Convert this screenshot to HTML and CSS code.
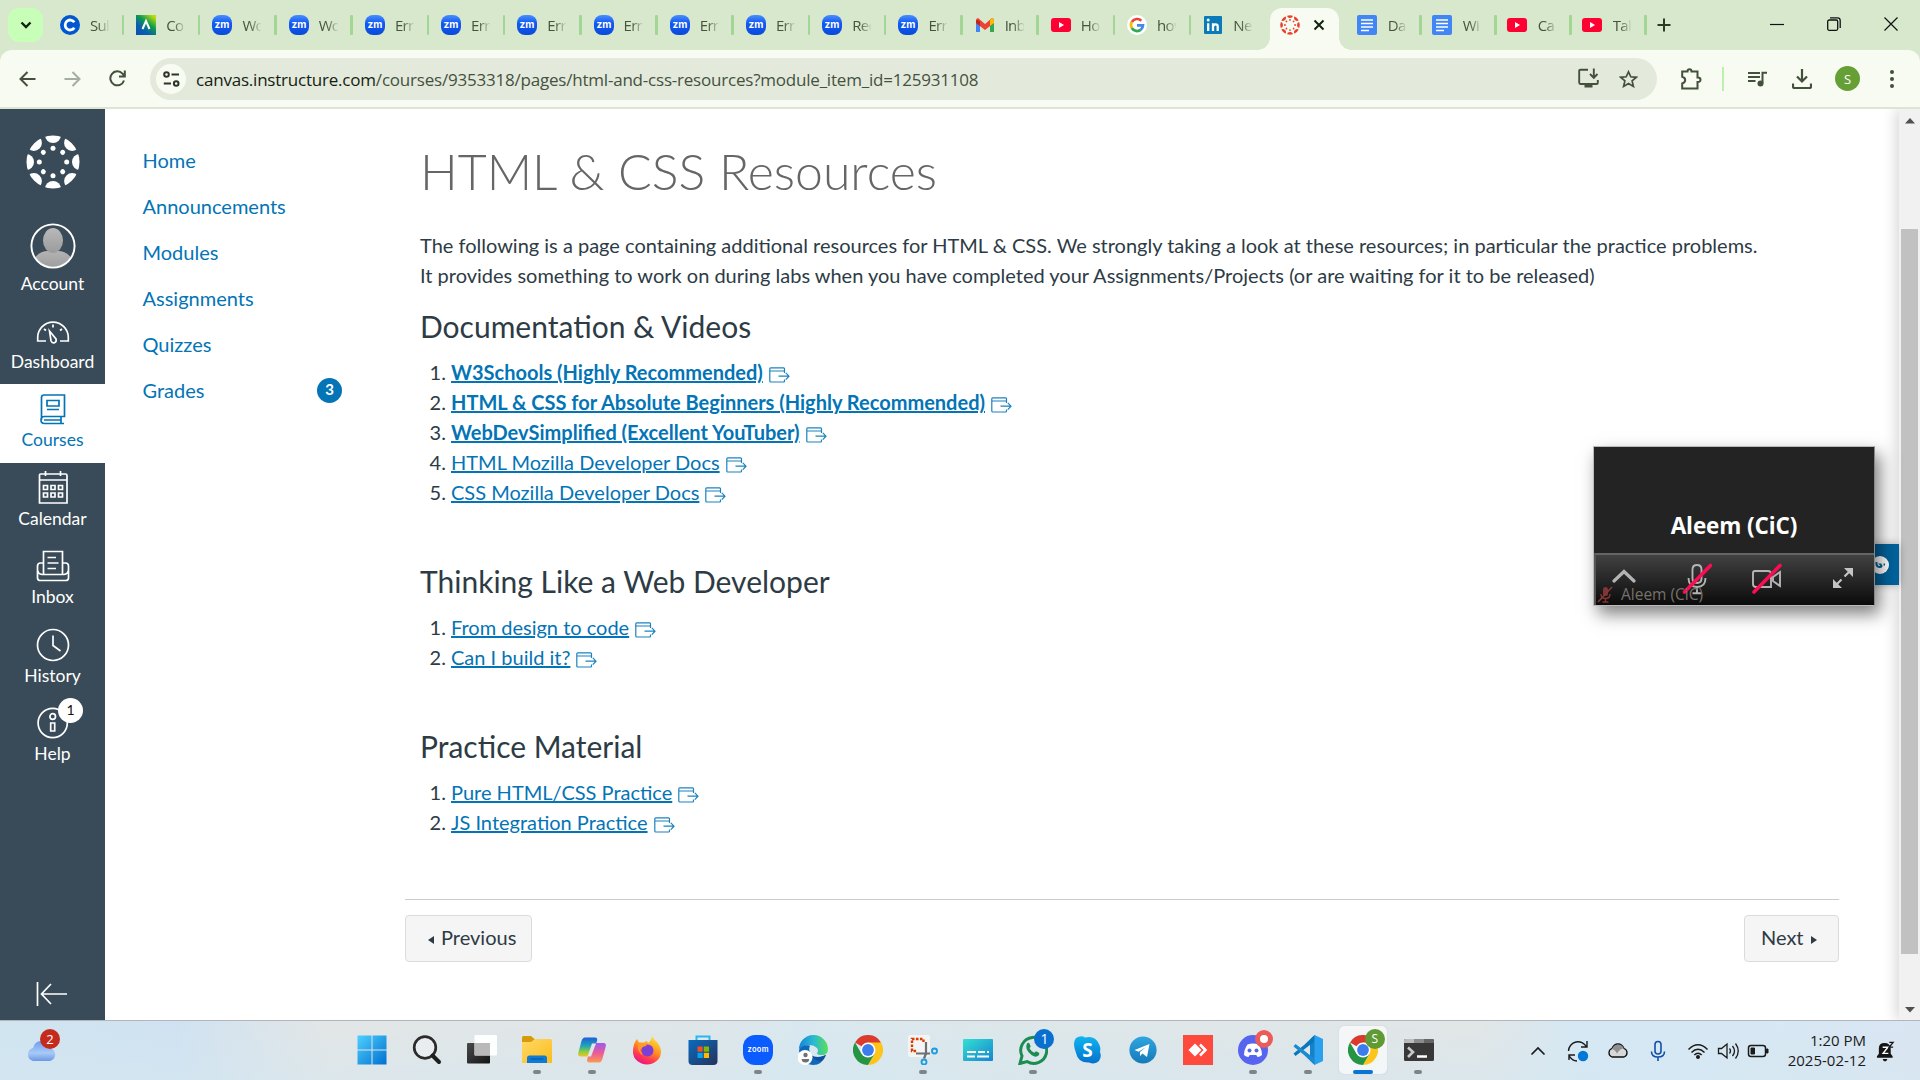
FILE: index.html
```html
<!DOCTYPE html>
<html lang="en">
<head>
<meta charset="utf-8">
<title>HTML &amp; CSS Resources</title>
<link rel="stylesheet" href="styles.css">
</head>
<body>
<svg class="defs" width="0" height="0">
  <defs>
    <linearGradient id="g-zoom" x1="0" y1="0" x2="0" y2="1"><stop offset="0" stop-color="#4a90fb"/><stop offset=".4" stop-color="#1259f5"/><stop offset="1" stop-color="#0a4bd8"/></linearGradient>
    <linearGradient id="g-code" x1="0" y1="1" x2=".8" y2="0"><stop offset="0" stop-color="#0a4fb5"/><stop offset=".35" stop-color="#0b5fae"/><stop offset=".65" stop-color="#0f9a4c"/><stop offset="1" stop-color="#b9dc10"/></linearGradient>
    <linearGradient id="g-win" x1="0" y1="0" x2="1" y2="1"><stop offset="0" stop-color="#4fd0ff"/><stop offset="1" stop-color="#0070d0"/></linearGradient>
    <linearGradient id="g-folder" x1="0" y1="0" x2="1" y2="1"><stop offset="0" stop-color="#ffd968"/><stop offset="1" stop-color="#fcbc1c"/></linearGradient>
    <linearGradient id="g-cop1" x1="0" y1="0" x2="0" y2="1"><stop offset="0" stop-color="#1a5fd8"/><stop offset=".45" stop-color="#23a5b8"/><stop offset=".75" stop-color="#8ccf3c"/><stop offset="1" stop-color="#f5c12b"/></linearGradient>
    <linearGradient id="g-cop2" x1="0" y1="0" x2="0" y2="1"><stop offset="0" stop-color="#9b5cf0"/><stop offset=".5" stop-color="#ea5a9a"/><stop offset="1" stop-color="#fb9a50"/></linearGradient>
    <linearGradient id="g-fox" x1=".8" y1="0" x2=".3" y2="1"><stop offset="0" stop-color="#ffe83b"/><stop offset=".45" stop-color="#ff9420"/><stop offset=".75" stop-color="#ff3a50"/><stop offset="1" stop-color="#e8128a"/></linearGradient>
    <linearGradient id="g-store" x1="0" y1="0" x2="1" y2="1"><stop offset="0" stop-color="#0b6bc0"/><stop offset="1" stop-color="#24325a"/></linearGradient>
    <linearGradient id="g-edge" x1="0" y1=".5" x2="1" y2=".5"><stop offset="0" stop-color="#1286d8"/><stop offset=".5" stop-color="#2ab9d2"/><stop offset="1" stop-color="#5ade58"/></linearGradient>
    <linearGradient id="g-cap" x1="0" y1="0" x2="1" y2="1"><stop offset="0" stop-color="#33e0d2"/><stop offset="1" stop-color="#1685cf"/></linearGradient>
    <linearGradient id="g-sky" x1="0" y1="0" x2="0" y2="1"><stop offset="0" stop-color="#10b4f0"/><stop offset="1" stop-color="#0572cc"/></linearGradient>
    <linearGradient id="g-tg" x1="0" y1="0" x2="0" y2="1"><stop offset="0" stop-color="#2fa6e0"/><stop offset="1" stop-color="#1679b8"/></linearGradient>
    <linearGradient id="g-cloud" x1="0" y1="0" x2="0" y2="1"><stop offset="0" stop-color="#6d9cf0"/><stop offset=".6" stop-color="#a9caf8"/><stop offset="1" stop-color="#6c98e2"/></linearGradient>
    <linearGradient id="g-av" x1="0" y1="0" x2="0" y2="1"><stop offset="0" stop-color="#b9b9b9"/><stop offset="1" stop-color="#9b9b9b"/></linearGradient>
    <linearGradient id="g-dark" x1="0" y1="0" x2="1" y2="1"><stop offset="0" stop-color="#4a4a4a"/><stop offset="1" stop-color="#141414"/></linearGradient>
  </defs>
  <symbol id="zm" viewBox="0 0 20 20"><rect width="20" height="20" rx="8" fill="url(#g-zoom)"/><text x="10" y="13.3" text-anchor="middle" font-family="Inter,sans-serif" font-weight="700" font-size="10" textLength="15" fill="#fff">zm</text></symbol>
  <symbol id="yt" viewBox="0 0 20 20"><rect y="3" width="20" height="14" rx="3" fill="#ff0033"/><path d="M8 7v6l5-3z" fill="#fff"/></symbol>
  <symbol id="doc" viewBox="0 0 20 20"><rect width="20" height="20" rx="2" fill="#4285f4"/><path d="M4 5h12M4 8.500h12M4 12h12M4 15.500h8" stroke="#fff" stroke-width="1.700"/></symbol>
  <symbol id="ring" viewBox="-27 -27 54 54"><defs><clipPath id="rc"><circle r="26.500"/></clipPath>
    <g id="seg" clip-path="url(#rc)"><ellipse cy="-27" rx="8" ry="8"/><circle cy="-13.700" r="2.500"/></g></defs>
    <use href="#seg"/><use href="#seg" transform="rotate(45)"/><use href="#seg" transform="rotate(90)"/><use href="#seg" transform="rotate(135)"/><use href="#seg" transform="rotate(180)"/><use href="#seg" transform="rotate(225)"/><use href="#seg" transform="rotate(270)"/><use href="#seg" transform="rotate(315)"/></symbol>
  <symbol id="chrome" viewBox="0 0 30 30"><path d="M15 15L2 7.500A15 15 0 0 1 28 7.500z" fill="#dc3a2c"/><path d="M15 7.500H28A15 15 0 0 1 15 30l6.500-11.300z" fill="#fdc51b"/><path d="M2 7.500A15 15 0 0 0 15 30l6.500-11.300L15 15 8.500 18.700z" fill="#259544"/><circle cx="15" cy="15" r="7.500" fill="#fff"/><circle cx="15" cy="15" r="5.900" fill="#3b7ded"/></symbol>
  <symbol id="ext" viewBox="0 0 21 16"><path d="M15.500 6V1.700Q15.500 .8 14.600 .8H1.700Q.8 .8 .8 1.700V14.100Q.8 15 1.700 15H14.600Q15.500 15 15.500 14.100V12.500M.8 4H15.500M9.500 9.200H20M16.800 5.800L20 9.200l-3.200 3.400" fill="none" stroke="currentColor" stroke-width="1.200"/></symbol>
</svg>

<header class="browser">
  <div class="tabstrip">
    <button class="tabsearch"><svg width="12" height="8" viewBox="0 0 12 8"><path d="M1.500 1.500L6 6l4.500-4.500" fill="none" stroke="#14230f" stroke-width="2.400"/></svg></button>
    <div class="tabs">
      <div class="tab"><svg viewBox="0 0 20 20"><circle cx="10" cy="10" r="10" fill="#0156d1"/><path d="M14.300 7.200A5 5 0 1 0 14.300 12.800" fill="none" stroke="#fff" stroke-width="2.800"/></svg><span>Sul</span></div>
      <div class="tab"><svg viewBox="0 0 20 20"><rect width="20" height="20" fill="url(#g-code)"/><path d="M6.500 14L10 6l3.500 8" fill="none" stroke="#fff" stroke-width="2"/></svg><span>Co</span></div>
      <div class="tab"><svg><use href="#zm"/></svg><span>Wo</span></div>
      <div class="tab"><svg><use href="#zm"/></svg><span>Wo</span></div>
      <div class="tab"><svg><use href="#zm"/></svg><span>Err</span></div>
      <div class="tab"><svg><use href="#zm"/></svg><span>Err</span></div>
      <div class="tab"><svg><use href="#zm"/></svg><span>Err</span></div>
      <div class="tab"><svg><use href="#zm"/></svg><span>Err</span></div>
      <div class="tab"><svg><use href="#zm"/></svg><span>Err</span></div>
      <div class="tab"><svg><use href="#zm"/></svg><span>Err</span></div>
      <div class="tab"><svg><use href="#zm"/></svg><span>Rec</span></div>
      <div class="tab"><svg><use href="#zm"/></svg><span>Err</span></div>
      <div class="tab"><svg viewBox="0 0 20 20"><path d="M1 17V5l4 3v9z" fill="#4285f4"/><path d="M15 17V8l4-3v12z" fill="#34a853"/><path d="M1 5.500Q1 3 3 3l7 6 7-6q2 0 2 2.500V8l-9 7-9-7z" fill="#ea4335"/><path d="M15 5l2-2q2 .5 2 2.500V8l-4 3z" fill="#fbbc04"/><path d="M1 8V5l4 1v5z" fill="#c5221f"/></svg><span>Inb</span></div>
      <div class="tab"><svg><use href="#yt"/></svg><span>Ho</span></div>
      <div class="tab"><svg viewBox="0 0 20 20"><circle cx="10" cy="10" r="10" fill="#fff"/><g fill="none" stroke-width="2.700"><path d="M4.800 7A6 6 0 0 1 14.300 5.800" stroke="#ea4335"/><path d="M4.800 7a6 6 0 0 0 0 6" stroke="#fbbc04"/><path d="M4.800 13A6 6 0 0 0 13.900 14.600" stroke="#34a853"/><path d="M13.900 14.600A6 6 0 0 0 16 10.300H10" stroke="#4285f4"/></g></svg><span>hov</span></div>
      <div class="tab last"><svg viewBox="0 0 20 20"><rect x="1" y="1" width="18" height="18" rx="1" fill="#0a7ab8"/><path d="M5.200 8.200V16M10 16V8.200M10 12q0-2.700 2.500-2.700T14.700 12v4" fill="none" stroke="#fff" stroke-width="2.300"/><circle cx="5.200" cy="5" r="1.500" fill="#fff"/></svg><span>Ne</span></div>
      <div class="tab active"><svg class="red"><use href="#ring"/></svg><svg class="x" viewBox="0 0 12 12"><path d="M1.500 1.500l9 9M10.500 1.500l-9 9" stroke="#14230f" stroke-width="2"/></svg></div>
      <div class="tab after"><svg><use href="#doc"/></svg><span>Da</span></div>
      <div class="tab after"><svg><use href="#doc"/></svg><span>Wi</span></div>
      <div class="tab after"><svg><use href="#yt"/></svg><span>Ca</span></div>
      <div class="tab after"><svg><use href="#yt"/></svg><span>Tak</span></div>
    </div>
    <svg class="plus" viewBox="0 0 14 14"><path d="M7 .5v13M.5 7h13" stroke="#2c3b28" stroke-width="2"/></svg>
    <div class="winctl">
      <svg width="14" height="14" viewBox="0 0 14 14"><path d="M0 7.500h14" stroke="#111" stroke-width="1.200"/></svg>
      <svg width="14" height="14" viewBox="0 0 14 14"><rect x=".7" y="3" width="10" height="10.300" rx="1.500" fill="none" stroke="#111" stroke-width="1.300"/><path d="M3 .8h7.500q2.700 0 2.700 2.700V11" fill="none" stroke="#111" stroke-width="1.300"/></svg>
      <svg width="14" height="14" viewBox="0 0 14 14"><path d="M.5 .5l13 13M13.500 .5l-13 13" stroke="#111" stroke-width="1.200"/></svg>
    </div>
  </div>
  <div class="toolbar">
    <svg class="nav" width="17" height="16" viewBox="0 0 17 16"><path d="M16.500 8H2M8.500 1L1.500 8l7 7" fill="none" stroke="#42503c" stroke-width="2"/></svg>
    <svg class="nav" width="17" height="16" viewBox="0 0 17 16"><path d="M.5 8H15M8.500 1l7 7-7 7" fill="none" stroke="#a5aca0" stroke-width="2"/></svg>
    <svg class="nav" width="17" height="17" viewBox="0 0 17 17"><path d="M15 10.500A7 7 0 1 1 13.500 3.600L15.500 6M15.800 .5V6.500H10" fill="none" stroke="#42503c" stroke-width="2"/></svg>
    <div class="omnibox">
      <span class="site"><svg width="17" height="16" viewBox="0 0 17 16"><g fill="none" stroke="#2b3528" stroke-width="2"><circle cx="3.500" cy="3.500" r="2.300"/><path d="M8.500 3.500H16M.8 12.500H8"/><circle cx="13.200" cy="12.500" r="2.300"/></g></svg></span>
      <span class="url"><b>canvas.instructure.com</b>/courses/9353318/pages/html-and-css-resources?module_item_id=125931108</span>
      <svg class="inst" width="21" height="21" viewBox="0 0 21 21"><path d="M10 1.700H2.500Q1.200 1.700 1.200 3v11.500Q1.200 16 2.500 16H18.500q1.300 0 1.300-1.300V12M15.800 .5V9.500M12 6l3.800 3.800L19.500 6" fill="none" stroke="#42503c" stroke-width="1.900"/><path d="M6.500 16h8v3.500h-8z" fill="#42503c"/></svg>
      <svg width="19" height="18" viewBox="0 0 19 18"><path d="M9.500 1.800l2.300 5 5.500.5-4.200 3.600 1.300 5.500-4.900-2.900-4.900 2.900 1.300-5.500L1.700 7.300l5.500-.5z" fill="none" stroke="#42503c" stroke-width="1.700"/></svg>
    </div>
    <svg class="puz" width="22" height="22" viewBox="0 0 22 22"><path d="M2.200 3.500H7.500Q7.500 1.200 9.500 1.200T11.500 3.500H17.500V9.500Q20.500 9.500 20.500 11.800T17.500 14V20.500H2.200V15.500Q5.200 14.500 5.200 12T2.200 8.700z" fill="none" stroke="#42503c" stroke-width="2"/></svg>
    <i class="vline"></i>
    <svg class="media" width="19" height="16" viewBox="0 0 19 16"><path d="M0 2h12M0 6h12M0 10h7.500M14.500 12V1.800H19" fill="none" stroke="#42503c" stroke-width="2"/><circle cx="12.500" cy="12.500" r="3" fill="#42503c"/></svg>
    <svg class="dl" width="20" height="20" viewBox="0 0 20 20"><path d="M10 0v12M5 7.500l5 5 5-5M1 14.500v3Q1 19 2.500 19h15q1.500 0 1.500-1.500v-3" fill="none" stroke="#42503c" stroke-width="2.200"/></svg>
    <span class="me">S</span>
    <svg class="dots" width="4" height="18" viewBox="0 0 4 18"><g fill="#42503c"><circle cx="2" cy="2" r="2"/><circle cx="2" cy="9" r="2"/><circle cx="2" cy="16" r="2"/></g></svg>
  </div>
</header>

<div class="viewport">
  <nav class="global">
    <svg class="logo"><use href="#ring"/></svg>
    <a class="acct"><svg width="46" height="46" viewBox="0 0 46 46"><defs><clipPath id="ac"><circle cx="23" cy="23" r="21"/></clipPath></defs><g clip-path="url(#ac)" fill="url(#g-av)"><path d="M-1 46Q5 28 18 28V24H28v4q13 0 19 18z"/><ellipse cx="23" cy="17.500" rx="10" ry="12.500"/></g><circle cx="23" cy="23" r="21.600" fill="none" stroke="#fff" stroke-width="1.900"/></svg><span>Account</span></a>
    <a><svg viewBox="0 0 34 34"><path d="M10 27H1.700V23.500a15.300 15.300 0 0 1 30.600 0V27H24M17 10.500v3M8 15l2 1.500M26 15l-2 1.500M13.500 17l6.500 8q.8 2.800-1.500 3.700-2.500.8-3.500-2z"/></svg><span>Dashboard</span></a>
    <a class="on"><svg viewBox="0 0 34 34"><path d="M5.500 28V5.500Q5.500 3 8 3H28.500V24.500H8.500Q5 24.500 5 28t3.500 3.500H28M25 24.500v7M8 28H25M11 8.500H23V14H11zM11 17.500H23"/></svg><span>Courses</span></a>
    <a><svg viewBox="0 0 34 34"><path d="M3.500 4Q3.500 3 4.500 3H29.500Q31 3 31 4.500V32H3.500zM3.500 9H31M9.500 0V5M24.500 0V5M7.500 14.500h4v4h-4zM15 14.500h4v4h-4zM22.500 14.500h4v4h-4zM7.500 22h4v4h-4zM15 22h4v4h-4zM22.500 22h4v4h-4z"/></svg><span>Calendar</span></a>
    <a><svg viewBox="0 0 34 34"><path d="M7.500 14H4.500Q1.500 14 1.500 17V29Q1.500 31.500 4.500 31.500H29.500Q32.500 31.500 32.500 29V17Q32.500 14 29.500 14H26.500M1.800 21.500Q2 25 6 25.500H28q4-.5 4.200-4M7.500 25.500V2.500H26.500V25.500M11.500 8.500H20M11.500 14H22.500M11.500 19.500H20"/></svg><span>Inbox</span></a>
    <a><svg viewBox="0 0 34 34"><circle cx="17" cy="17" r="15.500"/><path d="M17 7.500V17.500L24.500 23"/></svg><span>History</span></a>
    <a><svg viewBox="0 0 34 34"><circle cx="16.700" cy="17" r="14.600"/><circle cx="16.700" cy="10.500" r="2.800"/><path d="M14.700 17h4v8h-4z"/></svg><span>Help</span><b class="note">1</b></a>
    <svg class="collapse" width="32" height="24" viewBox="0 0 32 24"><path d="M1.500 0v24M31 12H6M15 2L5.500 12 15 22" fill="none" stroke="#fff" stroke-width="1.700"/></svg>
  </nav>
  <nav class="course">
    <a>Home</a><a>Announcements</a><a>Modules</a><a>Assignments</a><a>Quizzes</a><a>Grades<b>3</b></a>
  </nav>
  <main>
    <article>
      <h1>HTML &amp; CSS Resources</h1>
      <p>The following is a page containing additional resources for HTML &amp; CSS. We strongly taking a look at these resources; in particular the practice problems.<br>It provides something to work on during labs when you have completed your Assignments/Projects (or are waiting for it to be released)</p>
      <h2>Documentation &amp; Videos</h2>
      <ol>
        <li><a class="strong">W3Schools (Highly Recommended)</a><svg><use href="#ext"/></svg></li>
        <li><a class="strong">HTML &amp; CSS for Absolute Beginners (Highly Recommended)</a><svg><use href="#ext"/></svg></li>
        <li><a class="strong">WebDevSimplified (Excellent YouTuber)</a><svg><use href="#ext"/></svg></li>
        <li><a>HTML Mozilla Developer Docs</a><svg><use href="#ext"/></svg></li>
        <li><a>CSS Mozilla Developer Docs</a><svg><use href="#ext"/></svg></li>
      </ol>
      <h2>Thinking Like a Web Developer</h2>
      <ol>
        <li><a>From design to code</a><svg><use href="#ext"/></svg></li>
        <li><a>Can I build it?</a><svg><use href="#ext"/></svg></li>
      </ol>
      <h2>Practice Material</h2>
      <ol>
        <li><a>Pure HTML/CSS Practice</a><svg><use href="#ext"/></svg></li>
        <li><a>JS Integration Practice</a><svg><use href="#ext"/></svg></li>
      </ol>
    </article>
    <footer>
      <a class="prev"><svg width="6" height="8"><path d="M6 0v8L0 4z" fill="#2d3b45"/></svg>Previous</a>
      <a class="next">Next<svg width="6" height="8"><path d="M0 0v8l6-4z" fill="#2d3b45"/></svg></a>
    </footer>
  </main>
  <div class="scroll">
    <svg width="10" height="6"><path d="M0 5.500L5 0l5 5.500z" fill="#505050"/></svg>
    <i></i>
    <svg width="10" height="6"><path d="M0 0l5 5.500L10 0z" fill="#505050"/></svg>
  </div>
</div>

<div class="taskbar">
  <div class="weather"><svg width="31" height="20" viewBox="0 0 31 20"><path d="M7 20a7 6.800 0 0 1 0-13Q9 0 15 0t8 7a6.800 6.600 0 0 1 1 13z" fill="url(#g-cloud)"/></svg><b>2</b></div>
  <div class="apps">
    <span><svg viewBox="0 0 30 30"><path d="M.5 .5H14.500V14.500H.5zM15.500 .5H29.500V14.500H15.500zM.5 15.500H14.500V29.500H.5zM15.500 15.500H29.500V29.500H15.500z" fill="url(#g-win)"/></svg></span>
    <span><svg viewBox="0 0 30 30"><circle cx="13" cy="12.500" r="10.800" fill="#e9edf0" stroke="#2b2b2b" stroke-width="2.700"/><path d="M20.500 20.500l6.500 6.500" stroke="#1e1e1e" stroke-width="4" stroke-linecap="round"/></svg></span>
    <span><svg viewBox="0 0 30 30"><rect x="0" y="8" width="23" height="20.500" rx="1" fill="url(#g-dark)"/><rect x="7.500" y="0" width="22.500" height="20.500" rx="1" fill="#fff" fill-opacity=".93"/><rect x="7.500" y="8" width="15.500" height="12.500" fill="#b9b9b9"/></svg></span>
    <span class="run"><svg viewBox="0 0 30 30"><path d="M0 7V2.500Q0 1 1.500 1H9l4 3.500-4 3.500z" fill="#d99a08"/><path d="M0 7H9l4-3H28.500Q30 4 30 5.500V28H0z" fill="url(#g-folder)"/><path d="M5 28V23q0-2.500 2.500-2.500h15Q25 20.500 25 23v5z" fill="#0f7bd2"/><path d="M8.500 24h13" stroke="#0b55a0"/></svg></span>
    <span class="run"><svg viewBox="0 0 30 30"><path d="M8 2.500H18Q21 2.500 20 6L16 18q-1 3.500-5 3.500H4Q0 21.500 1.500 17L4.500 6Q5.500 2.500 8 2.500z" fill="url(#g-cop1)"/><path d="M22 27.500H12.500Q9 27.500 10.500 23L14.500 11.500Q15.500 8 19 8h7.500Q30 8 28.500 12.500L25.500 23.500Q24.500 27.500 22 27.500z" fill="url(#g-cop2)"/><path d="M15 8.500h4l-5 13h-3.500z" fill="#dfe7ea"/></svg></span>
    <span><svg viewBox="0 0 30 30"><path d="M20 1q2 4 5 6 4 5 4 10A14 12.500 0 0 1 1 17Q1 8 5 4l2 3.500h5q2-2 3-1.500l1 2q4-3 4-7z" fill="url(#g-fox)"/><circle cx="15.500" cy="15.500" r="6" fill="#7b3fd8"/><path d="M6 8q5-1 9 3-5 0-7 4l3 5Q5 18 6 8z" fill="#ff9a2a"/></svg></span>
    <span><svg viewBox="0 0 30 30"><path d="M8.500 6V1.500H21.500V6" fill="none" stroke="#28b8f0" stroke-width="2"/><path d="M.5 5h29V26q0 4-4 4h-21q-4 0-4-4z" fill="url(#g-store)"/><path d="M9.500 11.500h5.200v5.200H9.500z" fill="#f25022"/><path d="M15.800 11.500H21v5.200h-5.200z" fill="#7fba00"/><path d="M9.500 17.800h5.200V23H9.500z" fill="#00a4ef"/><path d="M15.800 17.800H21V23h-5.200z" fill="#ffb900"/></svg></span>
    <span class="run"><svg viewBox="0 0 30 30"><rect width="30" height="30" rx="12" fill="#0b5cff"/><text x="15" y="17" text-anchor="middle" font-family="Inter,sans-serif" font-size="7.500" font-weight="600" textLength="21" fill="#fff">zoom</text></svg></span>
    <span><svg viewBox="0 0 30 30"><path d="M1 15A14.500 14.500 0 0 1 30 14q0 6-6 6-5 0-5-2 2-2 0-5Q14 8 7 11T1 15z" fill="url(#g-edge)"/><path d="M1 15Q4 9.500 12 10.500 10 15 13 20t15 0Q24 30 15 30 2 29 1 15z" fill="#1068b8"/><path d="M13 20q6 4 15 0Q26 24 24 26 16 26 13 20z" fill="#0c4f9c"/><circle cx="7" cy="22.500" r="7.500" fill="#fff"/><circle cx="7.500" cy="20" r="2.200" fill="#707070"/><path d="M3.700 24h7.500q0 3.500-3.700 3.500T3.700 24z" fill="#707070"/></svg></span>
    <span><svg><use href="#chrome"/></svg></span>
    <span class="run"><svg viewBox="0 0 30 30"><rect width="22" height="22" rx="2" fill="#f4f4f4"/><path d="M15.500 7V4H4V16h5" fill="none" stroke="#d83b01" stroke-width="2.400" stroke-dasharray="2.600 1.400"/><path d="M18 7V20M8 18.500H22M18 18.500l-2 5" stroke="#6d6f73" stroke-width="2.200"/><g fill="none" stroke="#1f9be0" stroke-width="1.900"><circle cx="26.500" cy="16" r="2.500"/><circle cx="16" cy="27" r="2.500"/></g></svg></span>
    <span><svg viewBox="0 0 30 30"><rect y="4" width="30" height="22" rx="1" fill="url(#g-cap)"/><path d="M4 17H13M15 17h7M24 17h2M4 21.500H12M14 21.500H26" stroke="#fff" stroke-width="2"/></svg></span>
    <span class="run"><svg viewBox="0 0 30 30"><path d="M2 28.500l2-7.500A13 13 0 1 1 9 26.500z" fill="none" stroke="#1c8c50" stroke-width="3"/><path d="M9 8.500q1.500-1.500 2.700.5l1 2.500-1.200 1.800q1.500 3 4.700 4.400l1.800-1.500 3 1.500q1 1-.5 2.800-2.500 2.500-7-.5Q6 14 9 8.500z" fill="#1c8c50"/></svg><b class="pill blue">1</b></span>
    <span><svg viewBox="0 0 30 30"><path d="M3 3Q8 0 12 2.500 22 0 26 9q2 4 1 8 2 5-1 9-4 4-10 1.500Q5 28 3 18-1 8 3 3z" fill="url(#g-sky)"/><text x="14.500" y="22" text-anchor="middle" font-family="Open Sans" font-size="19" font-weight="700" fill="#fff">S</text></svg></span>
    <span><svg viewBox="0 0 30 30"><circle cx="15" cy="15" r="13.600" fill="url(#g-tg)"/><path d="M6.500 15L21.500 9 19 22l-4.500-3.500-2.500 2.500v-4l6-5-7.500 4.700z" fill="#fff"/></svg></span>
    <span><svg viewBox="0 0 30 30"><rect width="30" height="30" fill="#fe4a3c"/><path d="M12 8.500L18.500 15 12 21.500 5.500 15z" fill="#fff"/><path d="M17 9.500L22.500 15 17 20.500" fill="none" stroke="#fff" stroke-width="2.500"/></svg></span>
    <span class="run"><svg viewBox="0 0 30 30"><circle cx="15" cy="15" r="15" fill="#5664f0"/><path d="M9.500 9.500q5.500-2 11 0Q24 14.500 24 20q-2 2-4.500 2l-1.200-2h-6.600l-1.200 2Q8 22 6 20q0-5.500 3.500-10.500z" fill="#fff"/><circle cx="11.500" cy="15.500" r="2" fill="#5664f0"/><circle cx="18.500" cy="15.500" r="2" fill="#5664f0"/></svg><b class="pill rec"></b></span>
    <span class="run"><svg viewBox="0 0 30 30"><path d="M22 0V30L17 25.500V4.500z" fill="#1481c8"/><path d="M21.500 6.500L2.500 21 .5 18.500Q12 10 21.500 0z" fill="#0877be"/><path d="M21.500 23.500L2.500 9 .5 11.500Q12 20 21.500 30z" fill="#1a8bd0"/><path d="M21.500 0L30 4V26L21.500 30z" fill="#2aa0ee"/></svg></span>
    <span class="run cur"><svg><use href="#chrome"/></svg><b class="pill green">S</b></span>
    <span class="run"><svg viewBox="0 0 30 30"><rect y="4" width="30" height="22" rx="1.500" fill="#383838"/><path d="M0 8V5.500Q0 4 1.500 4H10v4z" fill="#bcbcbc"/><path d="M10 4H20V8H10z" fill="#8c8c8c"/><path d="M20 4h8.500Q30 4 30 5.500V8H20z" fill="#666"/><path d="M4 12.500l5 4.500-5 5" fill="none" stroke="#c9c9c9" stroke-width="2.600"/><path d="M13 21.500H23" stroke="#fff" stroke-width="2.500"/></svg></span>
  </div>
  <div class="tray">
    <svg viewBox="0 0 24 24"><path d="M5.500 15.500L12 9l6.500 6.500" fill="none" stroke="#1b1b1b" stroke-width="1.700"/></svg>
    <svg viewBox="0 0 24 24"><path d="M2.500 12A9.500 9.500 0 0 1 20.500 8M21 2v6h-6M3 21v-5h6M3 16.500Q6 22 11 22" fill="none" stroke="#1b1b1b" stroke-width="1.400"/><circle cx="17" cy="17" r="5.200" fill="#0078d7"/></svg>
    <svg viewBox="0 0 24 24"><path d="M6 18a4.500 4.500 0 0 1 0-8.500Q8 5 12 5t6 4.500A4.500 4.500 0 0 1 18 18z" fill="#d8d8d8" stroke="#111" stroke-width="1.300"/><path d="M6 10q2-4.500 6-4.500t6 4q-4 0-7 5-2-4-5-4.500z" fill="#8f8f8f"/></svg>
    <svg viewBox="0 0 24 24"><path d="M12 2.500q3 0 3 3V12q0 3-3 3t-3-3V5.500q0-3 3-3zM5.500 12.500Q5.500 18 12 18t6.500-5.500M12 18v4" fill="none" stroke="#124fa8" stroke-width="1.600"/></svg>
    <svg viewBox="0 0 24 24"><path d="M2.500 10.500Q12 1 21.500 10.500M5.500 13.500q6.500-6.500 13 0M8.300 16q3.700-3.500 7.400 0" fill="none" stroke="#1b1b1b" stroke-width="1.500"/><circle cx="12" cy="18" r="2" fill="#1b1b1b"/></svg>
    <svg class="s" viewBox="0 0 24 24"><path d="M2.500 9.500H5.500L11 5V19L5.500 14.500H2.500zM13.500 9.500q2 2.500 0 5M16.500 7q4 5 0 10M19.500 4.500q5.500 7.500 0 15" fill="none" stroke="#1b1b1b" stroke-width="1.300"/></svg>
    <svg class="s" viewBox="0 0 24 24"><rect x="2.500" y="6.500" width="17" height="11" rx="2.500" fill="none" stroke="#1b1b1b" stroke-width="1.500"/><path d="M5 9h3.500v6H5zM20.500 10h1.500v4h-1.500z" fill="#1b1b1b" stroke="#1b1b1b"/></svg>
    <div class="clock"><div>1:20 PM</div><div>2025-02-12</div></div>
    <svg class="bell" viewBox="0 0 20 22"><path d="M1 18V16.500L3 14V8Q3 2.500 9 2.500t6.500 6V14l2 2.500V18zM7 19.500h5Q11.500 22 9.500 22T7 19.500z" fill="#151515"/><path d="M7 7h5.500L7.500 13.500h5.500" fill="none" stroke="#fff" stroke-width="1.500"/><path d="M14 2h4l-4 5h4" fill="none" stroke="#151515" stroke-width="1.400"/></svg>
  </div>
</div>

<div class="helptab"><svg width="18" height="18" viewBox="0 0 18 18"><circle cx="9" cy="9" r="9" fill="#fff"/><path d="M5.500 6Q5 11 8.500 11T9.500 8.500H10.500M12.500 8.500h1.500" fill="none" stroke="#00629b" stroke-width="2"/></svg></div>
<div class="meeting">
  <div class="who">Aleem (CiC)</div>
  <div class="ctl">
    <div class="ghost"><svg width="16" height="17" viewBox="0 0 16 17"><rect x="6" y="1" width="5" height="9" rx="2.500" fill="#7d3535"/><path d="M4 8q0 4.500 4.500 4.500T13 8M8.500 12v4M5.500 16h6" stroke="#7d3535" stroke-width="1.500" fill="none"/><path d="M1 16L15 1" stroke="#8a3838" stroke-width="1.600"/></svg>Aleem (CiC)</div>
    <svg class="m1" width="24" height="14" viewBox="0 0 24 14"><path d="M2 12L12 2.500 22 12" fill="none" stroke="#b4b4b4" stroke-width="3.200" stroke-linecap="round"/></svg>
    <svg class="m2" width="30" height="32" viewBox="0 0 30 32"><path d="M15 2q4.500 0 4.500 4.500v9Q19.500 20 15 20t-4.500-4.500v-9Q10.500 2 15 2zM6.500 15Q6.500 24 15 24t8.500-9M15 24v6M10.500 30.200h9" fill="none" stroke="#b4b4b4" stroke-width="1.900"/><path d="M2.500 29L28.500 2.500" stroke="#fb0d55" stroke-width="3.600" stroke-linecap="round"/></svg>
    <svg class="m3" width="32" height="32" viewBox="0 0 32 32"><path d="M4 8H18q3 0 3 3V24H6q-3 0-3-3V10q0-2 2-2M23 14l7-5V23l-7-5z" fill="none" stroke="#b4b4b4" stroke-width="1.900"/><path d="M4 29L30 2.500" stroke="#fb0d55" stroke-width="3.600" stroke-linecap="round"/></svg>
    <svg class="m4" width="20" height="20" viewBox="0 0 20 20"><path d="M11.500 8.500L18 2M8.500 11.500L2 18" stroke="#c4c4c4" stroke-width="2.200"/><path d="M11 0h9v9zM0 11v9h9z" fill="#c4c4c4"/></svg>
  </div>
</div>
</body>
</html>
```
FILE: styles.css
```css
* { box-sizing: border-box; }
body { margin: 0; width: 1920px; height: 1080px; overflow: hidden; display: flex; flex-direction: column; position: relative; font-family: "Lato", sans-serif; color: #2d3b45; background: #fff; }
svg { display: block; flex: none; }
.defs { position: absolute; }

/* browser frame */
.browser { height: 109px; background: #d7e8cd; border-bottom: 2px solid #dde3d5; font-family: "Open Sans", "Noto Sans", sans-serif; flex: none; }
.tabstrip { height: 50px; display: flex; }
.tabsearch { width: 35px; height: 34px; margin: 8px 3px 0 8px; padding: 0; border: 0; border-radius: 11px; background: #c8ffb8; display: flex; align-items: center; justify-content: center; }
.tabs { display: flex; }
.tab { width: 76.22px; height: 50px; padding-left: 14px; display: flex; align-items: center; position: relative; font-size: 15px; color: #46543f; }
.tab svg { width: 20px; height: 20px; }
.tab span { width: 19px; margin-left: 10px; overflow: hidden; white-space: nowrap; letter-spacing: -.7px; line-height: 24px; -webkit-mask-image: linear-gradient(90deg, #000 40%, transparent 105%); mask-image: linear-gradient(90deg, #000 40%, transparent 105%); }
.tab::after { content: ""; position: absolute; right: -2px; top: 15px; width: 2.500px; height: 20px; background: #a3d695; border-radius: 1px; }
.tab.last::after { display: none; }
.tab.last { width: 80.500px; }
.tab.active { width: 69px; height: 42px; margin: 8px 6px 0 0; padding: 0 0 8px 10px; background: #f8fbf1; border-radius: 12px 12px 0 0; }
.tab.active::before { content: ""; position: absolute; left: -12px; right: -12px; bottom: 0; height: 12px; background: radial-gradient(circle at 0 0, transparent 11.500px, #f8fbf1 12px) 0 0 / 12px 12px no-repeat, radial-gradient(circle at 12px 0, transparent 11.500px, #f8fbf1 12px) 100% 0 / 12px 12px no-repeat; }
.tab.active::after { display: none; }
.tab.active .red { fill: #e8402c; }
.tab.active .x { width: 12px; height: 12px; margin-left: 13px; }
.tab.after { width: 75px; padding-left: 12px; }
.tab.after span { margin-left: 11px; width: 18px; }
.plus { width: 14px; height: 14px; margin: 18px 0 0 12px; }
.winctl { margin-left: auto; margin-right: 22px; padding-top: 17px; display: flex; gap: 43px; }
.toolbar { height: 57px; background: #f8fbf1; border-radius: 12px 12px 0 0; display: flex; align-items: center; padding: 0 26px 0 19px; }
.nav { margin-right: 28px; }
.omnibox { width: 1507px; height: 42px; margin-left: -4px; border-radius: 21px; background: #e3eadc; display: flex; align-items: center; padding: 0 19px 0 6px; }
.site { width: 30px; height: 30px; border-radius: 50%; background: #f8fbf1; display: flex; align-items: center; justify-content: center; }
.url { margin-left: 10px; padding-top: 2px; font-size: 17px; color: #45513f; white-space: nowrap; letter-spacing: -.21px; }
.url b { font-weight: 400; color: #161d13; }
.inst { margin-left: auto; margin-right: 20px; }
.puz { margin-left: 23px; }
.vline { width: 2px; height: 24px; margin-left: 20px; background: #bdefae; }
.media { margin-left: 24px; }
.dl { margin-left: 25px; }
.me { width: 25px; height: 25px; margin-left: 23px; border-radius: 50%; background: #659f35; color: #fff; font-size: 13px; display: flex; align-items: center; justify-content: center; }
.dots { margin-left: auto; }

/* page */
.viewport { height: 911px; display: flex; flex: none; }
.global { width: 105px; background: #394b58; color: #fff; display: flex; flex-direction: column; align-items: stretch; padding-top: 26px; flex: none; }
.logo { width: 54px; height: 54px; fill: #fff; align-self: center; }
.global a { height: 78.400px; padding-top: 8px; display: flex; flex-direction: column; align-items: center; position: relative; font-size: 17.500px; }
.global a svg { width: 34px; height: 34px; fill: none; stroke: currentColor; stroke-width: 1.700; }
.global a span { margin-top: 2px; line-height: 24px; }
.global a.acct { height: 93px; margin-top: 24px; padding-top: 10px; }
.global a.acct svg { width: 46px; height: 46px; stroke: none; }
.global a.acct span { margin-top: 3px; }
.global a.on { background: #fff; color: #0374b5; }
.note { position: absolute; left: 58px; top: 0; width: 25px; height: 25px; border-radius: 50%; background: #fff; color: #111; font-size: 14px; font-weight: 400; text-align: center; line-height: 23px; }
.collapse { margin: auto 0 14px 36px; }
.course { width: 300px; padding: 28px 63px 0 37.500px; display: flex; flex-direction: column; font-size: 20px; color: #0374b5; flex: none; }
.course a { height: 46px; line-height: 46px; display: flex; align-items: center; justify-content: space-between; }
.course b { width: 25px; height: 25px; margin-top: 1px; border-radius: 50%; background: #0374b5; color: #fff; font-size: 15px; line-height: 23px; text-align: center; }
main { width: 1434px; flex: none; display: flex; flex-direction: column; }
article { height: 791px; padding: 32px 15px 0; border-bottom: 1px solid #c7cdd1; font-size: 20px; line-height: 30px; }
h1 { margin: 0 0 29px; font-size: 50px; line-height: 60px; font-weight: 300; color: #666; }
p { margin: 0; white-space: nowrap; }
h2 { margin: 18px 0 13px; font-size: 30px; line-height: 36px; font-weight: 400; }
ol { margin: 0; padding-left: 31px; }
ol + h2 { margin-top: 56px; }
li > a { color: #0374b5; text-decoration: underline; }
li > a.strong { font-weight: 700; }
li svg { display: inline-block; width: 21px; height: 16px; margin-left: 6px; color: #1b82bd; vertical-align: -3px; }
footer { display: flex; justify-content: space-between; padding-top: 15px; }
footer a { height: 47px; border: 1px solid #d9dcde; border-radius: 4px; background: #f5f5f5; font-size: 20px; line-height: 41px; display: flex; align-items: center; padding-bottom: 3px; }
.prev { width: 127px; padding-left: 22px; gap: 7px; }
.next { width: 95px; padding-left: 16px; gap: 7px; }
.prev svg, .next svg { margin-top: 5px; }
.scroll { width: 21px; margin-left: auto; background: #f1f1f1; box-shadow: -3px 0 14px rgba(0,0,0,.16); display: flex; flex-direction: column; align-items: center; padding: 9px 0 7px; clip-path: inset(0 0 0 -30px); }
.scroll i { width: 17px; height: 725px; margin: 105px 0 auto; background: #c1c1c1; }

/* taskbar */
.taskbar { height: 60px; flex: none; display: flex; border-top: 1px solid #b2b6ba; font-family: "Open Sans", "Noto Sans", sans-serif; background: linear-gradient(180deg, rgba(226,230,230,0) 0%, rgba(213,231,240,.5) 100%), linear-gradient(90deg, #d0e4f0 0, #d0e2f1 180px, #e3e6e6 330px, #dfe6e8 700px, #d9e8f0 800px, #dde7ea 1000px, #e2e6e6 1480px, #d5e8f4 1580px, #d7e8f4 1750px, #dae5f2 1920px); position: relative; }
.weather { width: 344.500px; padding: 20px 0 0 26px; position: relative; }
.weather b { position: absolute; left: 40px; top: 8px; width: 20px; height: 20px; border-radius: 50%; background: #c42b1c; color: #fff; font-size: 13px; line-height: 20px; text-align: center; font-weight: 400; }
.apps { display: flex; }
.apps span { width: 55.090px; height: 59px; padding-top: 14px; display: flex; justify-content: center; position: relative; }
.apps svg { width: 30px; height: 30px; position: relative; }
.run::after { content: ""; position: absolute; bottom: 6px; left: 23.500px; width: 8px; height: 4px; border-radius: 2px; background: #7f8587; }
.run.cur::after { left: 17.500px; width: 20px; background: #0a74d4; }
.run.cur::before { content: ""; position: absolute; left: 3px; top: 5px; width: 48px; height: 48px; border-radius: 5px; background: rgba(255,255,255,.65); box-shadow: 0 0 1px #aaa; }
.pill { position: absolute; left: 29px; top: 8px; width: 20px; height: 20px; border-radius: 50%; color: #fff; font-size: 14px; line-height: 20px; font-weight: 400; text-align: center; }
.blue { background: #0a70d0; }
.green { background: #5f9a35; font-size: 12px; }
.rec { background: #fff; border: 5.500px solid #ec5a5a; width: 18px; height: 18px; top: 9px; }
.tray { margin-left: auto; padding-right: 25px; display: flex; align-items: center; gap: 16px; }
.tray svg { width: 24px; height: 24px; }
.tray svg.s { margin-left: -10px; }
.clock { width: 92px; text-align: right; margin-left: -12px; font-size: 15px; line-height: 20px; color: #1b1b1b; white-space: nowrap; margin-top: -2px; }
.tray svg.bell { width: 19px; height: 22px; margin-left: -6px; }

/* floating call window and the help handle behind it */
.helptab { position: absolute; left: 1860px; top: 544px; width: 39px; height: 41px; padding: 12px 0 0 11px; background: #00629b; box-shadow: 0 0 8px rgba(0,0,0,.3); }
.meeting { position: absolute; left: 1593px; top: 446px; width: 282px; height: 160px; border: 1px solid #bbb; border-right-color: #888; background: #232323; box-shadow: 5px 8px 16px rgba(0,0,0,.5); display: flex; flex-direction: column; font-family: "Open Sans", "Noto Sans", sans-serif; }
.who { flex: 1; padding-top: 66px; color: #fff; font-size: 22.500px; line-height: 26px; font-weight: 700; text-align: center; letter-spacing: -.1px; }
.ctl { height: 52px; border-top: 2px solid #646464; border-left: 2px solid #555; background: linear-gradient(#414141, #0b0b0b); display: flex; align-items: flex-start; position: relative; }
.m1 { margin: 14px 0 0 16px; }
.m2 { margin: 8px 0 0 46px; }
.m3 { margin: 8px 0 0 38px; }
.m4 { margin: 13px 0 0 51px; }
.ghost { position: absolute; left: 1px; bottom: 1px; display: flex; align-items: center; gap: 8px; color: #77716a; font-size: 15.500px; line-height: 20px; }
```
